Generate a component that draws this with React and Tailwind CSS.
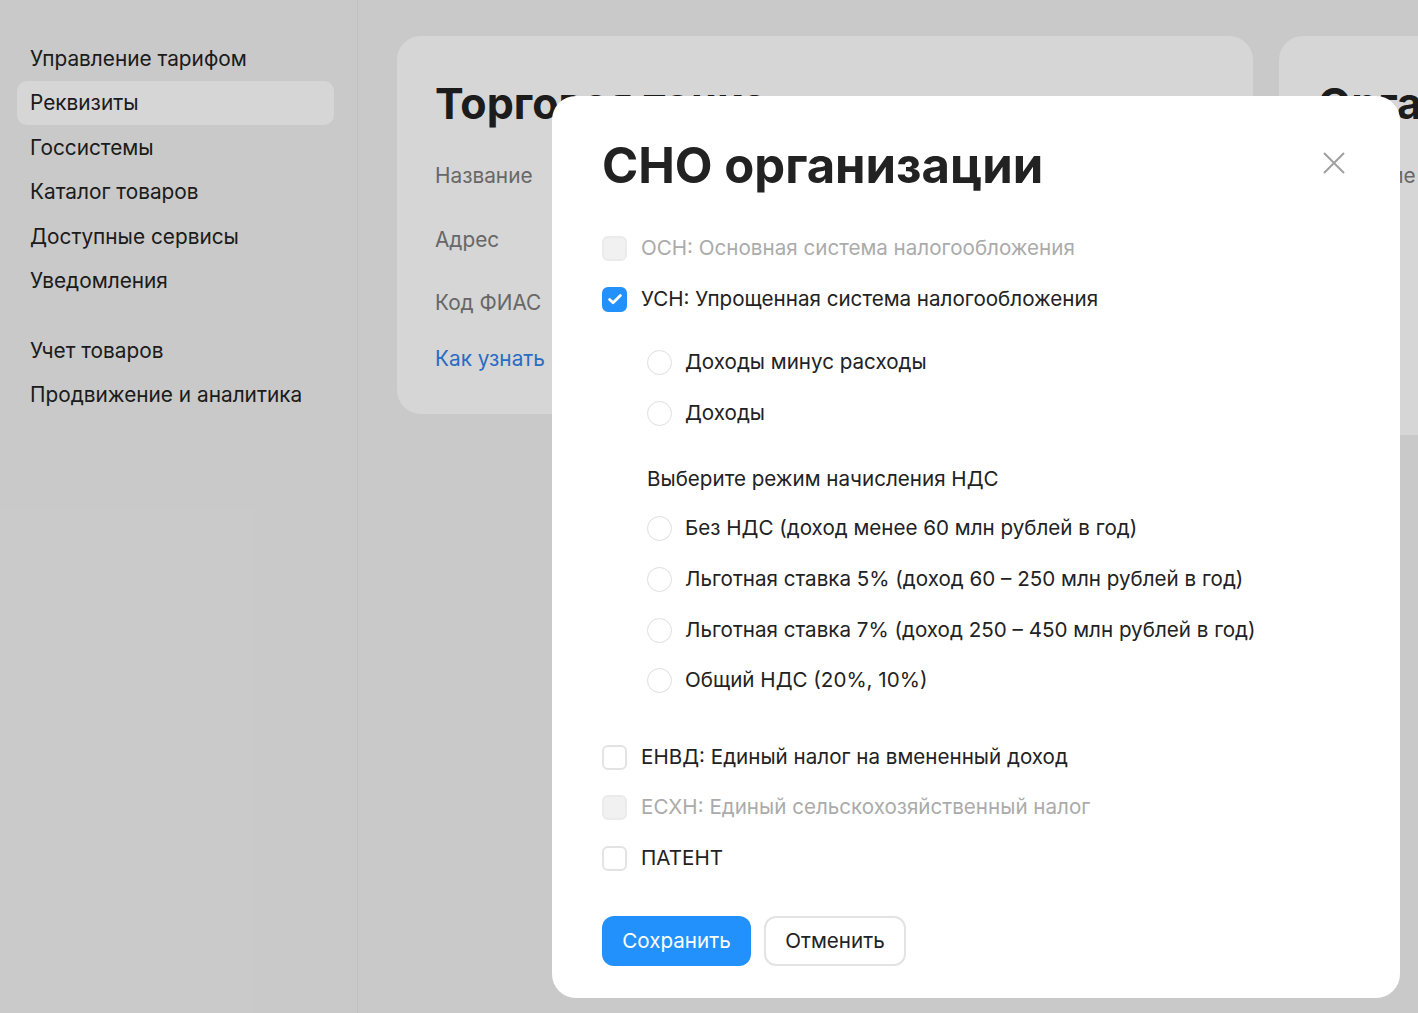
import { useState } from 'react';

const sideTop = ['Управление тарифом', 'Реквизиты', 'Госсистемы', 'Каталог товаров', 'Доступные сервисы', 'Уведомления'];
const sideBottom = ['Учет товаров', 'Продвижение и аналитика'];

const vatModes = [
    'Без НДС (доход менее 60 млн рублей в год)',
    'Льготная ставка 5% (доход 60 – 250 млн рублей в год)',
    'Льготная ставка 7% (доход 250 – 450 млн рублей в год)',
    'Общий НДС (20%, 10%)',
];

function Checkbox({ checked, disabled, label, onClick, className = '' }) {
    return (
        <div className={`flex items-center h-[26px] ${className}`} onClick={disabled ? undefined : onClick}>
            <span
                className={`flex items-center justify-center w-[25px] h-[25px] rounded-[6px] border-2 shrink-0 ${
                    checked
                        ? 'bg-[#2291fb] border-[#2291fb]'
                        : disabled
                        ? 'bg-[#f1f1f1] border-[#ebebeb]'
                        : 'bg-white border-[#e3e3e3]'
                }`}
            >
                {checked && (
                    <svg width="18" height="18" viewBox="0 0 16 16" fill="none">
                        <path d="M3.2 8.4l3.1 3L12.8 4.9" stroke="white" strokeWidth="2.5" strokeLinecap="round" strokeLinejoin="round" />
                    </svg>
                )}
            </span>
            <span className={`ml-[14px] text-[20.6px] leading-[26px] whitespace-nowrap ${disabled ? 'text-[#ababab]' : 'text-[#222]'}`}>{label}</span>
        </div>
    );
}

function Radio({ checked, label, onClick, className = '' }) {
    return (
        <div className={`flex items-center h-[26px] ${className}`} onClick={onClick}>
            <span className="flex items-center justify-center w-[25px] h-[25px] rounded-full border-[1.5px] border-[#dedede] bg-white shrink-0">
                {checked && <span className="w-[11px] h-[11px] rounded-full bg-[#2291fb]" />}
            </span>
            <span className="ml-[13px] text-[20.6px] leading-[26px] text-[#222] whitespace-nowrap">{label}</span>
        </div>
    );
}

export default function App() {
    const [usn, setUsn] = useState(true);
    const [envd, setEnvd] = useState(false);
    const [patent, setPatent] = useState(false);
    const [usnType, setUsnType] = useState(null);
    const [vat, setVat] = useState(null);

    return (
        <div className="relative w-[1418px] h-[1013px] overflow-hidden bg-[#f0f0f0] font-['Inter','Noto_Sans',sans-serif] text-[#222]">
            <div className="flex h-full">
                {/* sidebar */}
                <aside className="w-[358px] shrink-0 border-r border-[#e6e6e6] pt-[36px] pl-[17px] pr-[23px]">
                    {sideTop.map((item, i) => (
                        <div
                            key={item}
                            className={`h-[44.5px] flex items-center pl-[13px] rounded-[10px] text-[20.8px] ${i === 1 ? 'bg-white' : ''}`}
                        >
                            {item}
                        </div>
                    ))}
                    <div className="mt-[25px]">
                        {sideBottom.map((item) => (
                            <div key={item} className="h-[44.5px] flex items-center pl-[13px] text-[20.8px]">
                                {item}
                            </div>
                        ))}
                    </div>
                </aside>

                {/* main */}
                <main className="flex-1 flex items-start gap-[26px] pt-[36px] pl-[39px] overflow-hidden">
                    <section className="w-[856px] h-[378px] shrink-0 bg-white rounded-[24px] pt-[46px] px-[38px]">
                        <h2 className="text-[43px] leading-[1] font-bold whitespace-nowrap">Торговая точка</h2>
                        <div className="mt-[38px] text-[20.8px] text-[#7b7b7b] leading-[26px]">Название</div>
                        <div className="mt-[38px] text-[20.8px] text-[#7b7b7b] leading-[26px]">Адрес</div>
                        <div className="mt-[37px] text-[20.8px] text-[#7b7b7b] leading-[26px]">Код ФИАС</div>
                        <div className="mt-[30px] text-[20.8px] text-[#3381e9] leading-[26px]">Как узнать код ФИАС</div>
                    </section>
                    <section className="w-[600px] h-[399px] shrink-0 bg-white rounded-[24px] pt-[46px] px-[39px]">
                        <h2 className="text-[43px] leading-[1] font-bold whitespace-nowrap">Организация</h2>
                        <div className="mt-[38px] text-[20.8px] text-[#7b7b7b] leading-[26px]">Название</div>
                    </section>
                </main>
            </div>

            {/* overlay */}
            <div className="absolute inset-0 bg-black/[0.16]" />

            {/* modal */}
            <div className="absolute left-[552px] top-[96px] w-[848px] h-[902px] bg-white rounded-[24px] px-[50px] pt-[42px] pb-[32px]">
                <button className="absolute right-[54px] top-[55px] w-[24px] h-[24px] flex items-center justify-center">
                    <svg width="24" height="24" viewBox="0 0 24 24" fill="none">
                        <path d="M2 2l20 20M22 2L2 22" stroke="#a0a0a0" strokeWidth="2" />
                    </svg>
                </button>

                <h1 className="text-[49px] leading-[56px] font-bold text-[#222]">СНО организации</h1>

                <Checkbox disabled label="ОСН: Основная система налогообложения" className="mt-[41px]" />
                <Checkbox checked={usn} label="УСН: Упрощенная система налогообложения" onClick={() => setUsn(!usn)} className="mt-[25px]" />

                <div className="pl-[45px]">
                    <Radio checked={usnType === 0} label="Доходы минус расходы" onClick={() => setUsnType(0)} className="mt-[37px]" />
                    <Radio checked={usnType === 1} label="Доходы" onClick={() => setUsnType(1)} className="mt-[25px]" />

                    <div className="mt-[40px] text-[20.6px] leading-[26px] text-[#222]">Выберите режим начисления НДС</div>
                    {vatModes.map((m, i) => (
                        <Radio
                            key={m}
                            checked={vat === i}
                            label={m}
                            onClick={() => setVat(i)}
                            className={i === 0 ? 'mt-[23px]' : i === 3 ? 'mt-[24px]' : 'mt-[25px]'}
                        />
                    ))}
                </div>

                <Checkbox checked={envd} label="ЕНВД: Единый налог на вмененный доход" onClick={() => setEnvd(!envd)} className="mt-[51px]" />
                <Checkbox disabled label="ЕСХН: Единый сельскохозяйственный налог" className="mt-[24px]" />
                <Checkbox checked={patent} label="ПАТЕНТ" onClick={() => setPatent(!patent)} className="mt-[25px]" />

                <div className="mt-[45px] flex gap-[13px]">
                    <button className="h-[50px] w-[149px] rounded-[12px] bg-[#2291fb] text-white text-[20.6px]">Сохранить</button>
                    <button className="h-[50px] w-[142px] rounded-[12px] border-2 border-[#e3e3e3] bg-white text-[#222] text-[20.6px]">Отменить</button>
                </div>
            </div>
        </div>
    );
}
